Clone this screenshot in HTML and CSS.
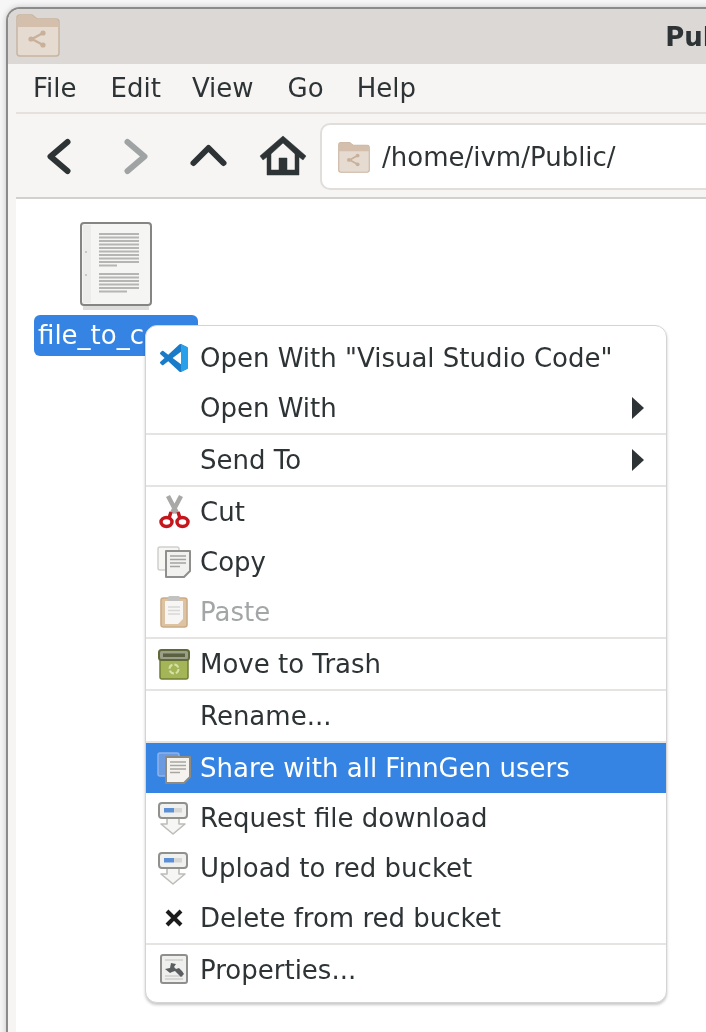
FILE: index.html
```html
<!DOCTYPE html>
<html lang="en">
<head>
  <meta charset="UTF-8" />
  <meta name="viewport" content="width=device-width, initial-scale=1.0" />
  <title>Public</title>
  <link rel="stylesheet" href="styles.css">
</head>
<body>
  <svg class="defs" width="0" height="0">
    <symbol id="folderShare" viewBox="0 0 44 44">
      <path d="M1 5a3 3 0 0 1 3-3h12l5 4h19a3 3 0 0 1 3 3v31a3 3 0 0 1-3 3H4a3 3 0 0 1-3-3z" fill="#e6dbd0" stroke="#c9b4a0" stroke-width="1.500"/>
      <path d="M1.500 14V5a3 3 0 0 1 3-3h11l5 4h19a3 3 0 0 1 3 3v5z" fill="#d3bfac"/>
      <path d="M27 20l-11 6 11 6" fill="none" stroke="#c9b09a" stroke-width="2.400"/>
      <circle cx="27" cy="20" r="2.600" fill="#c9b09a"/><circle cx="15" cy="26" r="2.600" fill="#c9b09a"/><circle cx="27" cy="32" r="2.600" fill="#c9b09a"/>
    </symbol>
    <symbol id="transfer" viewBox="0 0 30 32" overflow="visible">
      <path d="M9 15v7H3l12 10 12-10h-6v-7" fill="#f6f6f4" stroke="#bcbdb9" stroke-width="1.600" stroke-linejoin="round"/>
      <rect x="1" y="1" width="28" height="15" rx="3" fill="#f0f0ee" stroke="#8f918d" stroke-width="2"/>
      <rect x="6" y="6" width="10" height="4.500" fill="#5b8fd6"/><rect x="16" y="6" width="8" height="4.500" fill="#d6d6d4"/>
    </symbol>
  </svg>

  <div class="window">
    <header class="titlebar">
      <svg class="app-icon" width="44" height="44"><use href="#folderShare"/></svg>
      <strong class="title">Public</strong>
      <span></span>
    </header>

    <nav class="menubar">
      <span>File</span><span>Edit</span><span>View</span><span>Go</span><span>Help</span>
    </nav>
    <div class="rule"></div>

    <div class="toolbar">
      <button class="tool">
        <svg width="48" height="48" viewBox="0 0 48 48"><path d="M33.500 10l-17 14.500 17 14.500" fill="none" stroke="#2e3436" stroke-width="6" stroke-linecap="round" stroke-linejoin="round"/></svg>
      </button>
      <button class="tool">
        <svg width="48" height="48" viewBox="0 0 48 48"><path d="M18.500 10l17 14.500-17 14.500" fill="none" stroke="#a0a3a4" stroke-width="6" stroke-linecap="round" stroke-linejoin="round"/></svg>
      </button>
      <button class="tool">
        <svg width="48" height="48" viewBox="0 0 48 48"><path d="M9.500 31l15-15 15 15" fill="none" stroke="#2e3436" stroke-width="6" stroke-linecap="round" stroke-linejoin="round"/></svg>
      </button>
      <button class="tool">
        <svg width="48" height="48" viewBox="0 0 48 48"><path fill-rule="evenodd" d="M24 4l23 20-3 4-4-3v18H8V25l-4 3-3-4zM24 11L12 22v16h8V26h8v12h8V22z" fill="#2e3436" stroke="#2e3436" stroke-width=".5" stroke-linejoin="round"/></svg>
      </button>
      <div class="location">
        <svg width="32" height="32"><use href="#folderShare"/></svg>
        <span>/home/ivm/Public/</span>
      </div>
    </div>
    <div class="rule rule-dark"></div>

    <main class="files">
      <div class="file">
        <svg width="74" height="90" viewBox="0 0 74 90">
          <rect x="4" y="85" width="66" height="4" fill="#dcdcda"/>
          <rect x="2" y="2" width="70" height="82" rx="3" fill="#f5f5f4" stroke="#858583" stroke-width="2"/>
          <rect x="4" y="4" width="8" height="78" fill="#ececeb"/>
          <circle cx="7" cy="31" r="1" fill="#bbb"/><circle cx="7" cy="54" r="1" fill="#bbb"/>
          <path d="M20 13h40M20 16.500h40M20 20h40M20 23.500h40M20 27h40M20 30.500h40M20 34h40M20 37.500h40M20 41h40M20 44.500h18M20 53h40M20 56.500h40M20 60h40M20 63.500h40M20 67h40M20 70.500h28" stroke="#b5b5b3" stroke-width="1.800"/>
        </svg>
        <span class="file-name">file_to_copy</span>
      </div>
    </main>
  </div>

  <ul class="menu">
    <li class="item">
      <svg class="ico" viewBox="0 0 24 24"><path d="M23.150 2.587L18.210.21a1.494 1.494 0 0 0-1.705.29l-9.460 8.630-4.120-3.128a.999.999 0 0 0-1.276.057L.327 7.261A1 1 0 0 0 .326 8.740L3.899 12 .326 15.260a1 1 0 0 0 .001 1.479L1.650 17.940a.999.999 0 0 0 1.276.057l4.120-3.128 9.460 8.630a1.492 1.492 0 0 0 1.704.29l4.942-2.377A1.500 1.500 0 0 0 24 20.060V3.939a1.500 1.500 0 0 0-.85-1.352zm-5.146 14.861L10.826 12l7.178-5.448v10.896z" fill="#1a7cc9"/><path d="M18 0l5.150 2.587A1.500 1.500 0 0 1 24 3.940v16.120a1.500 1.500 0 0 1-.85 1.352L18 24z" fill="#2a9fea"/></svg>
      <span>Open With "Visual Studio Code"</span>
    </li>
    <li class="item"><i class="ico"></i><span>Open With</span><b class="arrow"></b></li>
    <li class="sep"></li>
    <li class="item"><i class="ico"></i><span>Send To</span><b class="arrow"></b></li>
    <li class="sep"></li>
    <li class="item">
      <svg class="ico" viewBox="0 0 28 28"><path d="M8 -2l9 17M21 -2L12 15" stroke="#a8a9a6" stroke-width="4.500"/><path d="M11 14l-2 6M18 14l2 6" stroke="#c4161c" stroke-width="3.500"/><ellipse cx="6.500" cy="24" rx="5.500" ry="4.500" fill="none" stroke="#c4161c" stroke-width="3.500"/><ellipse cx="22.500" cy="24" rx="5.500" ry="4.500" fill="none" stroke="#c4161c" stroke-width="3.500"/></svg>
      <span>Cut</span>
    </li>
    <li class="item">
      <svg class="ico" viewBox="0 0 28 28"><rect x="-2" y="-1" width="21" height="23" rx="2" fill="#f6f6f5" stroke="#cfcfcd" stroke-width="1.500"/><path d="M6 3h24v20l-6 6H6z" fill="#f1f1ef" stroke="#8f908d" stroke-width="2" stroke-linejoin="round"/><path d="M10 8h16M10 11.500h16M10 15h16M10 18.500h10" stroke="#a3a4a1" stroke-width="1.500"/></svg>
      <span>Copy</span>
    </li>
    <li class="item off">
      <svg class="ico" viewBox="0 0 28 28"><rect x="1" y="0" width="26" height="29" rx="2.500" fill="#dcc3a2" stroke="#cdac85" stroke-width="1.600"/><path d="M5 3h18v18l-5 5H5z" fill="#f7f6f4"/><rect x="8" y="-2" width="12" height="5" rx="1.500" fill="#c2c2c0"/><path d="M8 9h12M8 12.500h12M8 16h12" stroke="#d8d8d6" stroke-width="1.500"/></svg>
      <span>Paste</span>
    </li>
    <li class="sep"></li>
    <li class="item">
      <svg class="ico" viewBox="0 0 28 28"><rect x="0" y="9" width="28" height="20" rx="2" fill="#a4b557" stroke="#6f7f35" stroke-width="1.500"/><rect x="-1" y="0" width="30" height="10" rx="2.500" fill="#9b9e88" stroke="#5f6a38" stroke-width="2"/><rect x="3" y="3.500" width="22" height="3.500" fill="#5a6040"/><circle cx="14" cy="19" r="4.500" fill="none" stroke="#d7e0a6" stroke-width="2" stroke-dasharray="5 2"/></svg>
      <span>Move to Trash</span>
    </li>
    <li class="sep"></li>
    <li class="item"><i class="ico"></i><span>Rename...</span></li>
    <li class="sep"></li>
    <li class="item active">
      <svg class="ico" viewBox="0 0 28 28"><rect x="-2" y="-1" width="21" height="23" rx="2" fill="#6a9be0" stroke="#8db3ea" stroke-width="1.500"/><path d="M6 3h24v20l-6 6H6z" fill="#f4f3ef" stroke="#8f8a80" stroke-width="2" stroke-linejoin="round"/><path d="M10 8h16M10 11.500h16M10 15h16M10 18.500h10" stroke="#a8a79f" stroke-width="1.500"/></svg>
      <span>Share with all FinnGen users</span>
    </li>
    <li class="item"><svg class="ico" viewBox="0 0 28 28"><use href="#transfer" x="-2" y="-2" width="30" height="32"/></svg><span>Request file download</span></li>
    <li class="item"><svg class="ico" viewBox="0 0 28 28"><use href="#transfer" x="-2" y="-2" width="30" height="32"/></svg><span>Upload to red bucket</span></li>
    <li class="item">
      <svg class="ico" viewBox="0 0 28 28"><path d="M7 7l14 14M21 7L7 21" stroke="#1c1c1c" stroke-width="4"/></svg>
      <span>Delete from red bucket</span>
    </li>
    <li class="sep"></li>
    <li class="item">
      <svg class="ico" viewBox="0 0 28 28"><rect x="1" y="-1" width="26" height="28" rx="2" fill="#efefed" stroke="#8f908d" stroke-width="2"/><path d="M5 4h18M5 20h18M5 23h18" stroke="#cfcfcd" stroke-width="1.500"/><path d="M5 13l5-1 1-5 5 1-2 3 2 2 3-1 3 3 2 3-3 3-3-3-3-3-3 1-2 1z" fill="#5b5e60"/></svg>
      <span>Properties...</span>
    </li>
  </ul>
</body>
</html>
```

FILE: styles.css
```css
html, body { margin: 0; height: 100%; overflow: hidden; }
body { background: #f6f6f6; font-family: "DejaVu Sans", sans-serif; font-size: 26px; color: #2e3436; }
.defs { position: absolute; }

.window { width: 1408px; height: 1040px; margin: 7px 0 0 6px; box-sizing: border-box; display: flex; flex-direction: column; background: #f6f5f4; border: 2px solid #8b8b8b; border-bottom: 0; border-radius: 14px 14px 0 0; overflow: hidden; box-shadow: 0 0 6px rgba(0,0,0,.2); filter: blur(.75px); }

.titlebar { flex: 0 0 55px; display: grid; grid-template-columns: 1fr auto 1fr; align-items: center; background: #dbd8d5; }
.app-icon { margin: -3px 0 0 8px; }
.title { font-weight: bold; }

.menubar { flex: 0 0 48px; display: flex; align-items: center; gap: 32px; padding-left: 25px; }
.menubar span:nth-child(2) { margin-left: 2px; }
.menubar span:nth-child(3) { margin-left: -1px; }
.menubar span:nth-child(4) { margin-left: 2px; }
.menubar span:nth-child(5) { margin-left: 1px; }

.rule { flex: 0 0 2px; margin-left: 8px; background: #e4e1df; }
.rule-dark { background: #d3d0cd; }

.toolbar { flex: 0 0 83px; display: flex; align-items: center; padding-left: 12px; box-sizing: border-box; }
.tool { width: 75px; height: 48px; padding: 0; border: 0; background: none; display: flex; justify-content: center; }
.location { flex: 1; height: 67px; margin-top: 2px; display: flex; align-items: center; gap: 12px; padding-left: 16px; box-sizing: border-box; background: #fff; border: 2px solid #e0dddb; border-radius: 10px 0 0 10px; }

.files { flex: 1; margin-left: 8px; padding: 22px 0 0 18px; background: #fff; }
.file { width: 164px; display: flex; flex-direction: column; align-items: center; }
.file-name { width: 100%; height: 41px; margin-top: 4px; padding-left: 4px; box-sizing: border-box; line-height: 40px; border-radius: 6px; background: #3584e4; color: #fff; white-space: nowrap; overflow: hidden; }

/* context menu sits over the window */
.menu { position: absolute; left: 145px; top: 325px; width: 522px; margin: 0; padding: 7px 0; box-sizing: border-box; list-style: none; background: #fff; border: 1px solid #d6d4d2; border-radius: 12px; box-shadow: 0 2px 3px rgba(0,0,0,.22); filter: blur(.7px); }
.item { height: 50px; display: flex; align-items: center; gap: 12px; padding: 0 22px 0 14px; box-sizing: border-box; white-space: nowrap; }
.ico { flex: 0 0 28px; width: 28px; height: 28px; display: block; overflow: visible; }
.item span { flex: 1; }
.sep { height: 2px; background: #e6e4e2; }
.off { color: #a3a6a7; }
.active { background: #3584e4; color: #fff; }
.arrow { width: 0; height: 0; border-left: 12px solid #2e3436; border-top: 11px solid transparent; border-bottom: 11px solid transparent; }
```
